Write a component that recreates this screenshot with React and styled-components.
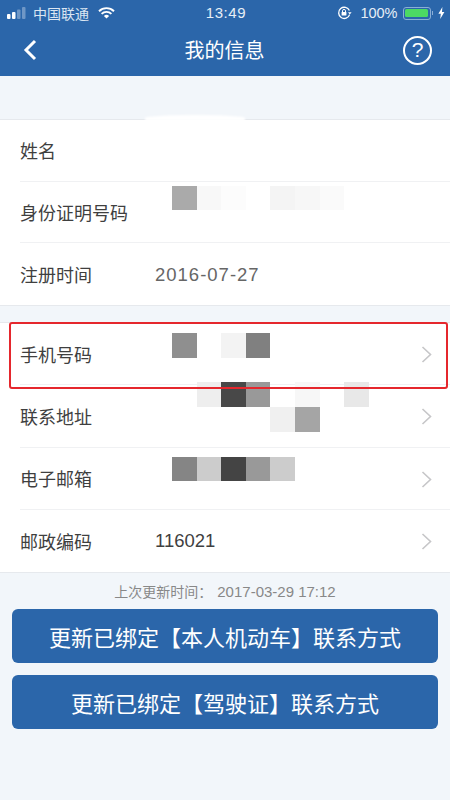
import React from 'react'
import styled, { createGlobalStyle } from 'styled-components'

const FONT = '"Liberation Sans", "Noto Sans CJK SC", sans-serif'

const GlobalStyle = createGlobalStyle`
  html, body {
    margin: 0;
    padding: 0;
    background: #f2f6fa;
  }
  * {
    box-sizing: border-box;
  }
  body {
    font-family: ${FONT};
  }
`

const secondGroup = [
  {
    label: '手机号码',
    top: 10,
    tiles: [
      [0, 0, '#8f8f8f'],
      [2, 0, '#f3f3f3'],
      [3, 0, '#808080'],
    ],
  },
  {
    label: '联系地址',
    top: -3,
    tiles: [
      [1, 0, '#eeeeee'],
      [2, 0, '#484848'],
      [3, 0, '#999999'],
      [5, 0, '#f7f7f7'],
      [7, 0, '#e8e8e8'],
      [4, 1, '#f0f0f0'],
      [5, 1, '#a5a5a5'],
    ],
  },
  {
    label: '电子邮箱',
    top: 9,
    tiles: [
      [0, 0, '#858585'],
      [1, 0, '#cccccc'],
      [2, 0, '#444444'],
      [3, 0, '#999999'],
      [4, 0, '#cccccc'],
    ],
  },
  { label: '邮政编码', value: '116021', last: true },
]

const idTiles = [
  [0, 0, '#aaaaaa'],
  [1, 0, '#f8f8f8'],
  [2, 0, '#fcfcfc'],
  [4, 0, '#f4f4f4'],
  [5, 0, '#f7f7f7'],
  [6, 0, '#fafafa'],
]

const App = () => {
  return (
    <>
      <GlobalStyle />
      <Page>
        <Header>
          <StatusBar>
            <StatusLeft>
              <svg width="20" height="12" viewBox="0 0 20 12">
                <rect x="0" y="7" width="3.5" height="5" rx="1" fill="#fff" />
                <rect x="5" y="5" width="3.5" height="7" rx="1" fill="#fff" />
                <rect x="10" y="2.5" width="3.5" height="9.5" rx="1" fill="#6f97c6" />
                <rect x="15" y="0" width="3.5" height="12" rx="1" fill="#6f97c6" />
              </svg>
              <Carrier>中国联通</Carrier>
              <svg width="17" height="12" viewBox="0 0 17 12">
                <path d="M1 4.2a10.8 10.8 0 0 1 15 0" fill="none" stroke="#fff" strokeWidth="1.9" />
                <path d="M3.6 6.9a7 7 0 0 1 9.8 0" fill="none" stroke="#fff" strokeWidth="1.9" />
                <path d="M8.5 11.6 5.9 9.1a3.7 3.7 0 0 1 5.2 0z" fill="#fff" />
              </svg>
            </StatusLeft>
            <Clock>13:49</Clock>
            <StatusRight>
              <svg width="15" height="14" viewBox="0 0 15 14">
                <path d="M12.6 8.6A5.6 5.6 0 1 1 12.4 4.6" fill="none" stroke="#fff" strokeWidth="1.3" />
                <path d="M11 6.2h3.6l-1.8 2.4z" fill="#fff" />
                <rect x="4.6" y="6" width="4.8" height="3.6" rx=".6" fill="#fff" />
                <path d="M5.5 6V4.9a1.5 1.5 0 0 1 3 0V6" fill="none" stroke="#fff" strokeWidth="1" />
              </svg>
              <Percent>100%</Percent>
              <Battery>
                <BatteryFill />
              </Battery>
              <BatteryCap />
              <svg width="7" height="12" viewBox="0 0 7 12">
                <path d="M4.4 0 0.4 6.8h2.4L2.2 12l4.2-7H4z" fill="#fff" />
              </svg>
            </StatusRight>
          </StatusBar>
          <NavBar>
            <BackIcon width="14" height="22" viewBox="0 0 14 22">
              <path d="M12 2 3 11l9 9" fill="none" stroke="#fff" strokeWidth="3" />
            </BackIcon>
            <Title>我的信息</Title>
            <Help>?</Help>
          </NavBar>
        </Header>

        <Group $first>
          <Smudge />
          <Row $tight>
            <Label>姓名</Label>
          </Row>
          <Row $tight>
            <Label>身份证明号码</Label>
            <Mosaic tiles={idTiles} top={4} />
          </Row>
          <Row $tight $last>
            <Label>注册时间</Label>
            <Value $muted>2016-07-27</Value>
          </Row>
        </Group>

        <Group>
          {secondGroup.map((item) => (
            <Row key={item.label} $last={item.last}>
              <Label>{item.label}</Label>
              {item.value && <Value>{item.value}</Value>}
              {item.tiles && <Mosaic tiles={item.tiles} top={item.top} />}
              <Chevron width="11" height="17" viewBox="0 0 11 17">
                <path d="M1.5 1 9.5 8.5 1.5 16" fill="none" stroke="#c6c6c8" strokeWidth="1.6" />
              </Chevron>
            </Row>
          ))}
          <RedOutline />
        </Group>

        <UpdatedAt>
          上次更新时间：<UpdatedDate>2017-03-29 17:12</UpdatedDate>
        </UpdatedAt>

        <Actions>
          <ActionButton>更新已绑定【本人机动车】联系方式</ActionButton>
          <ActionButton>更新已绑定【驾驶证】联系方式</ActionButton>
        </Actions>
      </Page>
    </>
  )
}

const Mosaic = ({ tiles, top }) => (
  <MosaicGrid $top={top}>
    {tiles.map(([col, row, shade]) => (
      <Tile key={`${col}-${row}`} $col={col} $row={row} $shade={shade} />
    ))}
  </MosaicGrid>
)

const Page = styled.main`
  width: 450px;
  height: 800px;
  overflow: hidden;
  background: #f2f6fa;
`

const Header = styled.header`
  height: 76px;
  background: #2b66aa;
  color: #fff;
`

const StatusBar = styled.div`
  display: grid;
  grid-template-columns: 1fr auto 1fr;
  align-items: center;
  height: 26px;
  padding: 0 5px 0 7px;
`

const StatusLeft = styled.div`
  display: flex;
  align-items: center;
  gap: 6px;
`

const Carrier = styled.span`
  margin: -1px 3px 0 0;
  font-size: 14px;
  color: #dbe6f2;
`

const Clock = styled.span`
  margin-top: -1px;
  font-size: 15px;
  letter-spacing: 0.6px;
  color: #e6eef6;
`

const StatusRight = styled.div`
  display: flex;
  align-items: center;
  justify-content: flex-end;
`

const Percent = styled.span`
  margin: -1px 5px 0 8px;
  font-size: 14.5px;
  color: #e6eef6;
`

const Battery = styled.div`
  width: 28px;
  height: 13px;
  padding: 1.5px;
  border: 1px solid #8aaed6;
  border-radius: 3px;
`

const BatteryFill = styled.div`
  height: 100%;
  border-radius: 1.5px;
  background: #4cd964;
`

const BatteryCap = styled.div`
  width: 1.5px;
  height: 4px;
  margin: 0 5px 0 1px;
  background: #8aaed6;
`

const NavBar = styled.nav`
  display: flex;
  align-items: center;
  justify-content: space-between;
  height: 48px;
  padding: 0 18px 0 23px;
`

const BackIcon = styled.svg`
  display: block;
`

const Title = styled.h1`
  margin: 0 0 2px 9px;
  font-size: 20px;
  font-weight: 400;
  color: #fff;
`

const Help = styled.div`
  display: flex;
  align-items: center;
  justify-content: center;
  width: 29px;
  height: 29px;
  border: 2px solid #fff;
  border-radius: 50%;
  font-size: 21px;
  color: #fff;
`

const Group = styled.section`
  position: relative;
  margin-top: ${(p) => (p.$first ? '43px' : '16px')};
  border-top: 1px solid #e6e9ed;
  border-bottom: 1px solid #e6e9ed;
  background: #fff;
`

const Smudge = styled.div`
  position: absolute;
  top: -5px;
  left: 145px;
  width: 100px;
  height: 6px;
  border-radius: 50% 50% 0 0;
  background: #fff;
  filter: blur(1px);
`

const Row = styled.div`
  position: relative;
  display: flex;
  align-items: center;
  height: ${(p) => (p.$tight ? '61.7px' : '62.25px')};
  margin-left: 20px;
  border-bottom: ${(p) => (p.$last ? 'none' : '1px solid #f0f1f3')};
`

const Label = styled.span`
  width: 135px;
  flex: none;
  font-size: 18px;
  color: #3f3f3f;
  white-space: nowrap;
`

const Value = styled.span`
  margin-top: 1px;
  font-size: 18.5px;
  letter-spacing: ${(p) => (p.$muted ? '1px' : '0')};
  color: ${(p) => (p.$muted ? '#666' : '#3f3f3f')};
`

const Chevron = styled.svg`
  position: absolute;
  top: 23px;
  right: 18px;
`

const MosaicGrid = styled.div`
  position: absolute;
  top: ${(p) => p.$top}px;
  left: 152px;
  display: grid;
  grid-template-columns: repeat(8, 24.6px);
  grid-auto-rows: 24.6px;
`

const Tile = styled.div`
  grid-column: ${(p) => p.$col + 1};
  grid-row: ${(p) => p.$row + 1};
  background: ${(p) => p.$shade};
`

const RedOutline = styled.div`
  position: absolute;
  top: -1px;
  left: 9px;
  right: 2px;
  height: 67px;
  border: 2px solid #e5272d;
  border-radius: 3px;
  pointer-events: none;
`

const UpdatedAt = styled.p`
  display: flex;
  align-items: center;
  justify-content: center;
  height: 36px;
  margin: 0;
  font-size: 14px;
  color: #888;
`

const UpdatedDate = styled.span`
  margin-left: 5px;
  font-size: 15px;
`

const Actions = styled.div`
  display: flex;
  flex-direction: column;
  gap: 12px;
  padding: 0 12px;
`

const ActionButton = styled.button`
  height: 54px;
  padding: 0;
  border: none;
  border-radius: 6px;
  background: #2b66aa;
  font-family: ${FONT};
  font-size: 22px;
  color: #fff;
`

export default App
